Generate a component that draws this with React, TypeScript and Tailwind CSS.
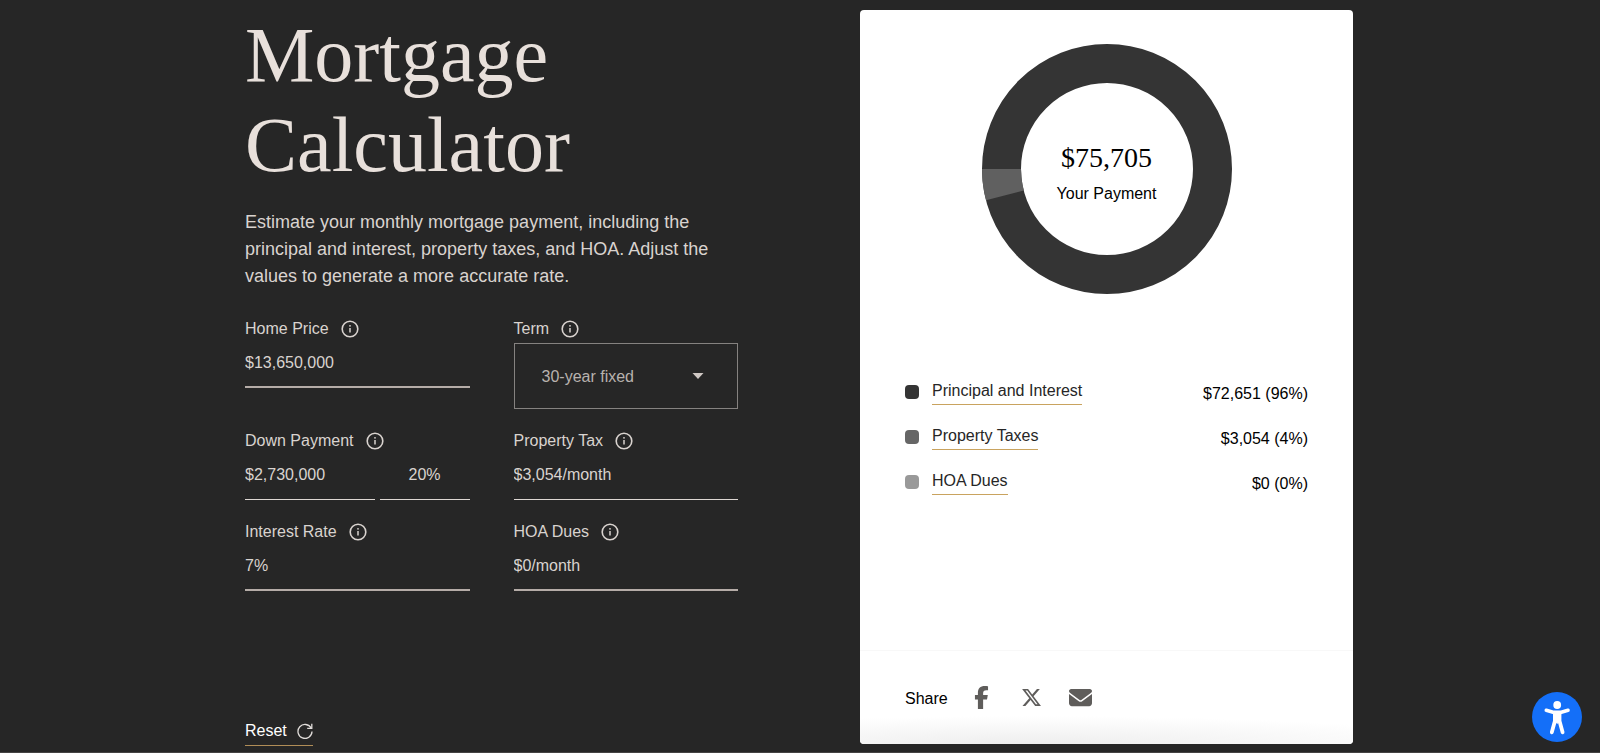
import React, { useState } from "react";
import { FaFacebookF, FaXTwitter, FaEnvelope } from "react-icons/fa6";

interface FieldLabelProps {
  htmlFor: string;
  text: string;
}

interface TextFieldProps {
  id: string;
  label: string;
  value: string;
  thin?: boolean;
  onChange: (value: string) => void;
}

interface DonutProps {
  total: string;
  taxShare: number;
}

const defaults = {
  homePrice: "$13,650,000",
  downPayment: "$2,730,000",
  downPercent: "20%",
  rate: "7%",
  term: "30",
  propertyTax: "$3,054/month",
  hoa: "$0/month",
};

const toNumber = (text: string) => Number(text.replace(/[^0-9.]/g, "")) || 0;

const toDollars = (value: number) => `$${Math.round(value).toLocaleString("en-US")}`;

// Standard fixed rate payment formula
const monthlyPayment = (loan: number, yearlyRate: number, years: number) => {
  const r = yearlyRate / 100 / 12;
  const n = years * 12;

  if (r === 0) {
    return loan / n;
  }

  return (loan * r) / (1 - Math.pow(1 + r, -n));
};

const FieldLabel: React.FC<FieldLabelProps> = ({ htmlFor, text }) => (
  <div className="flex h-[25px] items-center gap-3 pb-[3px]">
    <label htmlFor={htmlFor} className="text-base leading-[22px]">
      {text}
    </label>
    <button type="button" aria-label={`About ${text}`}>
      <svg viewBox="0 0 18 18" className="block h-[18px] w-[18px]" fill="none" stroke="currentColor">
        <circle cx="9" cy="9" r="7.8" strokeWidth="1.6" />
        <path d="M9 7.9v4.7" strokeWidth="1.5" />
        <circle cx="9" cy="5.8" r="0.9" fill="currentColor" stroke="none" />
      </svg>
    </button>
  </div>
);

const TextField: React.FC<TextFieldProps> = ({ id, label, value, thin, onChange }) => (
  <div>
    <FieldLabel htmlFor={id} text={label} />
    <input
      id={id}
      value={value}
      onChange={(e) => onChange(e.target.value)}
      className={
        thin
          ? "block h-[45px] w-full border-b border-[#ddd7d3] bg-transparent pb-[5px] text-base outline-none"
          : "block h-[45px] w-full border-b-2 border-[#b5aca7] bg-transparent pb-1 text-base outline-none"
      }
    />
  </div>
);

const Donut: React.FC<DonutProps> = ({ total, taxShare }) => {
  const radius = 105.5;
  const length = 2 * Math.PI * radius;

  return (
    <div className="mx-auto grid w-[250px] place-items-center">
      <svg viewBox="0 0 250 250" className="col-start-1 row-start-1 w-full" fill="none" strokeWidth="39">
        <circle cx="125" cy="125" r={radius} stroke="#343434" />
        <circle
          cx="125"
          cy="125"
          r={radius}
          stroke="#606060"
          strokeDasharray={`${length * taxShare} ${length}`}
          transform="rotate(180 125 125) scale(1 -1) translate(0 -250)"
        />
      </svg>
      <div className="col-start-1 row-start-1 pt-2 text-center text-black">
        <p className="font-['Liberation_Serif',serif] text-[28px] leading-9">{total}</p>
        <p className="mt-1.5 text-base leading-6">Your Payment</p>
      </div>
    </div>
  );
};

const App: React.FC = () => {
  const [form, setForm] = useState(defaults);

  const update = (key: keyof typeof defaults) => (value: string) =>
    setForm((prev) => ({ ...prev, [key]: value }));

  const principal = monthlyPayment(
    toNumber(form.homePrice) - toNumber(form.downPayment),
    toNumber(form.rate),
    Number(form.term)
  );
  const tax = toNumber(form.propertyTax);
  const hoa = toNumber(form.hoa);
  const total = principal + tax + hoa;
  const percent = (value: number) => `${total ? Math.round((value / total) * 100) : 0}%`;

  const legend = [
    { label: "Principal and Interest", value: principal, dot: "bg-[#343434]" },
    { label: "Property Taxes", value: tax, dot: "bg-[#666666]" },
    { label: "HOA Dues", value: hoa, dot: "bg-[#999999]" },
  ];

  return (
    <div className="min-h-screen border-b border-[#454343] bg-[#262626] font-['Liberation_Sans',Arial,sans-serif] text-[#d9d3cf]">
      <main className="mx-auto grid max-w-[1110px] grid-cols-1 gap-x-[122px] gap-y-10 pt-2.5 pr-0.5 lg:grid-cols-2">
        <section className="flex flex-col">
          <h1 className="font-['Liberation_Serif',serif] text-[78px] leading-[90px] text-[#e8e0db]">
            Mortgage
            <br />
            Calculator
          </h1>
          <p className="mt-[19px] max-w-[480px] text-lg leading-[27px]">
            Estimate your monthly mortgage payment, including the principal and interest, property
            taxes, and HOA. Adjust the values to generate a more accurate rate.
          </p>

          <form className="mt-7 grid grid-cols-2 gap-x-11 gap-y-[21px]" onSubmit={(e) => e.preventDefault()}>
            <TextField id="price" label="Home Price" value={form.homePrice} onChange={update("homePrice")} />

            <div>
              <FieldLabel htmlFor="term" text="Term" />
              <div className="grid items-center">
                <select
                  id="term"
                  value={form.term}
                  onChange={(e) => update("term")(e.target.value)}
                  className="col-start-1 row-start-1 h-[66px] w-full appearance-none border border-[#858280] bg-[#262626] px-[27px] pt-0.5 text-base text-[#b8b2ae] outline-none"
                >
                  <option value="30">30-year fixed</option>
                  <option value="20">20-year fixed</option>
                  <option value="15">15-year fixed</option>
                </select>
                <svg
                  viewBox="0 0 12 6"
                  className="pointer-events-none col-start-1 row-start-1 mr-[34px] h-1.5 w-3 justify-self-end"
                  fill="#cfc8c4"
                >
                  <path d="M0.5 0h11L6 6z" />
                </svg>
              </div>
            </div>

            <div>
              <FieldLabel htmlFor="down" text="Down Payment" />
              <div className="flex gap-[5px]">
                <input
                  id="down"
                  value={form.downPayment}
                  onChange={(e) => update("downPayment")(e.target.value)}
                  className="block h-[45px] min-w-0 flex-1 border-b border-[#ddd7d3] bg-transparent pb-[5px] text-base outline-none"
                />
                <input
                  aria-label="Down Payment percent"
                  value={form.downPercent}
                  onChange={(e) => update("downPercent")(e.target.value)}
                  className="block h-[45px] w-[90px] border-b border-[#ddd7d3] bg-transparent pb-[5px] text-center text-base outline-none"
                />
              </div>
            </div>

            <TextField id="tax" label="Property Tax" thin value={form.propertyTax} onChange={update("propertyTax")} />
            <TextField id="rate" label="Interest Rate" value={form.rate} onChange={update("rate")} />
            <TextField id="hoa" label="HOA Dues" value={form.hoa} onChange={update("hoa")} />
          </form>

          <button
            type="button"
            onClick={() => setForm(defaults)}
            className="mt-auto flex items-center gap-2.5 self-start border-b border-[#b08d57] pb-0.5 text-base leading-6 text-white"
          >
            Reset
            <svg viewBox="0 0 16 16" className="h-4 w-4" fill="none" stroke="#e0dcd9" strokeWidth="1.3">
              <path d="M14.2 5.2A7 7 0 1 0 15 8.6" />
              <path d="M14.8 0.8v4.6h-4.6" />
            </svg>
          </button>
        </section>

        <section className="mb-0.5 flex flex-col rounded bg-white text-black">
          <div className="px-[45px] pt-[34px] pb-[154px]">
            <Donut total={toDollars(total)} taxShare={total ? tax / total : 0} />

            <ul className="mt-[84px] flex flex-col gap-[17px]">
              {legend.map((item) => (
                <li key={item.label} className="flex h-7 items-center">
                  <span className={`mr-[13px] h-3.5 w-3.5 rounded ${item.dot}`} />
                  <a href="#" className="border-b border-[#c9a35f] pb-0.5 leading-[22px] text-[#262626]">
                    {item.label}
                  </a>
                  <span className="ml-auto pt-1 leading-6">
                    {toDollars(item.value)} ({percent(item.value)})
                  </span>
                </li>
              ))}
            </ul>
          </div>

          <div className="mt-auto flex h-[94px] items-center rounded-b border-t border-[#f8f8f8] bg-[radial-gradient(ellipse_90%_30%_at_35%_100%,#eeeeee,#ffffff)] px-[45px] text-[#5f5d5b]">
            <span className="pt-0.5 text-base text-black">Share</span>
            <a href="#" aria-label="Share on Facebook" className="ml-[22px]">
              <FaFacebookF size={23} />
            </a>
            <a href="#" aria-label="Share on X" className="ml-7">
              <FaXTwitter size={21} />
            </a>
            <a href="#" aria-label="Share by email" className="ml-[27px]">
              <FaEnvelope size={23} />
            </a>
          </div>
        </section>
      </main>

      <button
        type="button"
        aria-label="Accessibility options"
        className="fixed right-[18px] bottom-[11px] grid h-[50px] w-[50px] place-items-center rounded-full bg-[#146ff8]"
      >
        <svg viewBox="0 0 50 50" className="h-full w-full" fill="none" stroke="white" strokeLinecap="round" strokeLinejoin="round">
          <circle cx="25.2" cy="13" r="3.9" fill="white" stroke="none" />
          <path d="M14.3 18.3L22 20.4h6.400L36 18.300" strokeWidth="3.6" />
          <path d="M22.900 21v8L19.800 40.300M27.500 21v8L30.600 40.300" strokeWidth="3.8" />
          <path d="M22.500 20h5.500v8L25.200 31.500 22.500 28z" fill="white" strokeWidth="1" />
        </svg>
      </button>
    </div>
  );
};

export default App;
